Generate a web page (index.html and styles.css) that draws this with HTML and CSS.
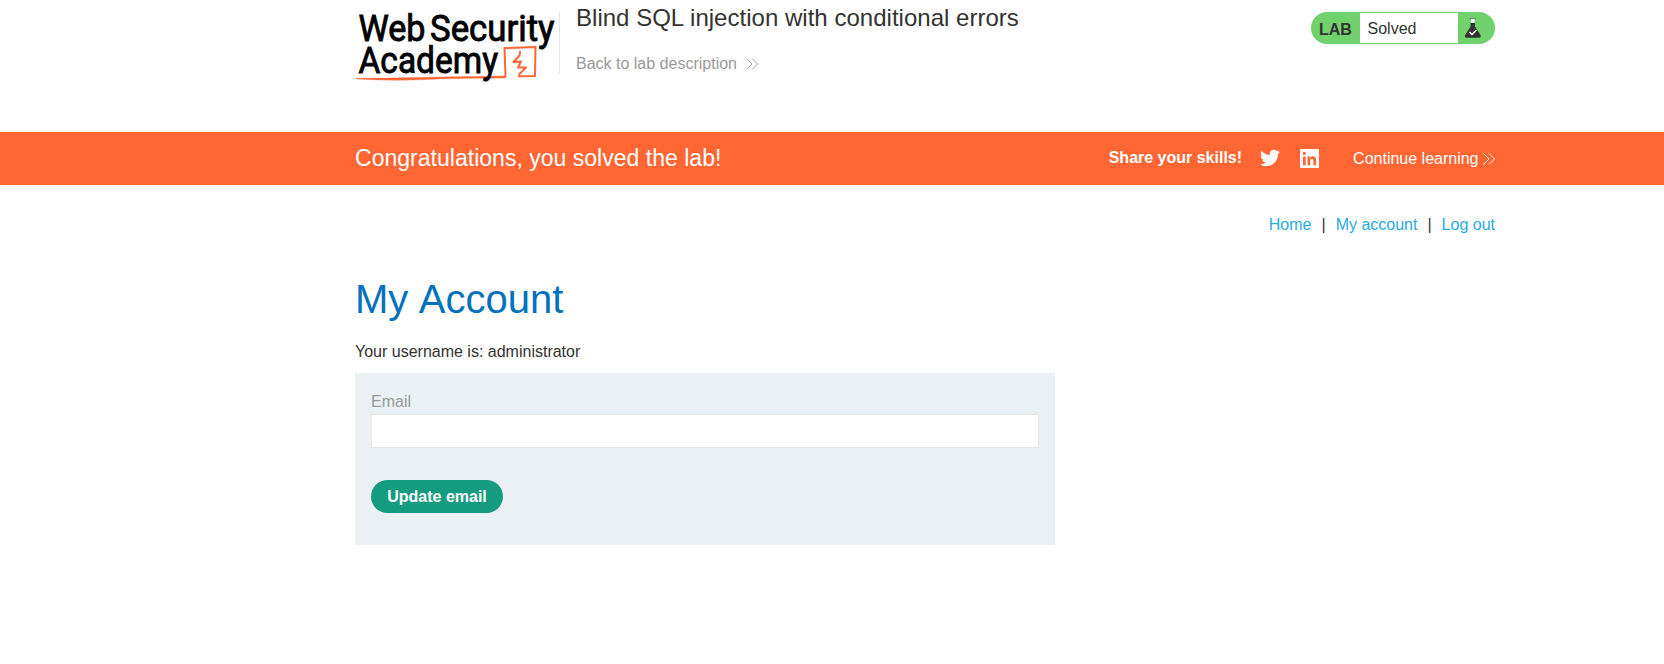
FILE: index.html
```html
<!DOCTYPE html>
<html lang="en">
<head>
<meta charset="utf-8">
<title>Blind SQL injection with conditional errors</title>
<link rel="stylesheet" href="styles.css">
</head>
<body>
<header class="lab-header container">
  <svg class="logo" viewBox="0 0 204 84" role="img" aria-label="Web Security Academy">
    <path class="logo-line" d="M150.500 77 L149.500 48 Q165 47.700 180.500 47 L180 76 L164 76.200 L164.500 74 L171 67.500 L163 67.500 L166 61.500 L158.500 62 L164 56 Q165.500 54 164.800 51"/>
    <path class="logo-swash" d="M1 78.300 Q30 78.400 60 77.600 T150.500 76 V78 Q100 78 70 79.500 T1 78.900z"/>
    <text x="3.500" y="40.500" textLength="67" lengthAdjust="spacingAndGlyphs">Web</text>
    <text x="75" y="40.500" textLength="124.500" lengthAdjust="spacingAndGlyphs">Security</text>
    <text x="3.500" y="73" textLength="139.500" lengthAdjust="spacingAndGlyphs">Academy</text>
  </svg>
  <div class="title">
    <h2>Blind SQL injection with conditional errors</h2>
    <a class="back">Back to lab description
      <svg class="chevrons" viewBox="0 0 12 12"><path d="M.5.5 6 6 .5 11.500M6 .5 11.500 6 6 11.500"/></svg>
    </a>
  </div>
  <div class="status">
    <b>LAB</b>
    <span>Solved</span>
    <svg class="flask" viewBox="0 0 18 22"><path d="M5.500 1.500h6.500" stroke="#777" stroke-width="1"/><path d="M7 2h3.600v4H7z" fill="#fff"/><path d="M6.600 6H11v3.500l5.500 8.500q.8 2.800-1.300 2.800H2.400Q.3 20.800 1.100 18l5.500-8.500z" fill="#333"/><path d="m5.500 15 2.500 2.500 4.500-4.500" fill="none" stroke="#fff" stroke-width="1.400"/></svg>
  </div>
</header>
<section class="banner">
  <div class="container banner-row">
    <h4>Congratulations, you solved the lab!</h4>
    <b class="share">Share your skills!</b>
    <svg class="twitter" viewBox="0 0 24 20"><path d="M23.950 2.570a10 10 0 0 1-2.820.770 4.960 4.960 0 0 0 2.160-2.720c-.950.550-2 .950-3.130 1.180a4.920 4.920 0 0 0-8.380 4.480C7.690 6.090 4.070 4.130 1.640 1.150a4.820 4.820 0 0 0-.670 2.480c0 1.710.870 3.210 2.190 4.100a4.900 4.900 0 0 1-2.230-.620v.060a4.920 4.920 0 0 0 3.950 4.830 5 5 0 0 1-2.210.080 4.940 4.940 0 0 0 4.600 3.420A9.870 9.870 0 0 1 0 17.540a14 14 0 0 0 7.550 2.210c9.050 0 14-7.500 14-13.980 0-.210 0-.420-.020-.630a9.940 9.940 0 0 0 2.420-2.570z"/></svg>
    <svg class="linkedin" viewBox="0 0 18 18"><path fill-rule="evenodd" d="M1 0h16q1 0 1 1v16q0 1-1 1H1q-1 0-1-1V1q0-1 1-1zM2.800 7v8.500h2.600V7zM4.100 2.700a1.500 1.500 0 1 0 0 3 1.500 1.500 0 0 0 0-3zM7.100 7v8.500h2.600v-4.200c0-2.800 3-2.700 3 0v4.200h2.600v-5c0-4.300-4.400-4.500-5.600-2.200V7z"/></svg>
    <a class="continue">Continue learning <svg class="chevrons" viewBox="0 0 12 12"><path d="M.5.5 6 6 .5 11.500M6 .5 11.500 6 6 11.500"/></svg></a>
  </div>
</section>
<main class="container">
  <nav class="nav"><a>Home</a><i>|</i><a>My account</a><i>|</i><a>Log out</a></nav>
  <h1>My Account</h1>
  <p>Your username is: administrator</p>
  <form class="login-form">
    <label for="email">Email</label>
    <input id="email" type="email">
    <button type="button">Update email</button>
  </form>
</main>
</body>
</html>
```
FILE: styles.css
```css
* { box-sizing: border-box; }
body {
  margin: 0;
  background: #fff;
  color: #333332;
  font: 16px/20px "Liberation Sans", Arial, sans-serif;
}
h1, h2, h4, p { margin: 0; font-weight: 400; }
.container { width: 1140px; margin-left: 355px; }

.lab-header { display: flex; align-items: flex-start; height: 132px; }
.logo { width: 204px; height: 84px; overflow: visible; }
.logo text { font: 400 37px Roboto, sans-serif; fill: #000; stroke: #000; stroke-width: .9; }
.logo-line { fill: none; stroke: #ff6633; stroke-width: 2; stroke-linejoin: round; }
.logo-swash { fill: #ff6633; stroke: #ff6633; stroke-width: .4; }
.title { flex: 1; height: 84px; padding-left: 17px; background: linear-gradient(#e5e5e5, #e5e5e5) 0 12px / 1px 62px no-repeat; }
.title h2 { padding-top: 4px; font-size: 24px; line-height: 28px; letter-spacing: .02px; }
.back { display: flex; align-items: center; gap: 9px; margin-top: 22px; color: #999; }
.chevrons { width: 12px; height: 12px; fill: none; stroke: currentColor; stroke-width: 1; }
.status {
  display: flex;
  width: 184px;
  height: 32px;
  margin-top: 12px;
  border-radius: 16px;
  background: #71d16d;
  overflow: hidden;
  line-height: 32px;
}
.status b { width: 49px; padding: 2px 0 0 8px; }
.status span { width: 98px; margin: 1px 0; padding-left: 7.500px; background: #fff; line-height: 32px; }
.flask { width: 18px; height: 22px; margin: 5px 0 0 6px; }

.banner { height: 53px; background: #ff6633; color: #fff; }
.banner-row { display: flex; align-items: center; height: 53px; }
.banner h4 { flex: 1; padding-bottom: 1px; font-size: 23px; letter-spacing: .02px; }
.share { margin-right: 18px; padding-bottom: 2px; }
.twitter { width: 20px; height: 18px; margin: 0 20px 1px 0; fill: #fff; }
.linkedin { width: 19px; height: 19px; margin-right: 34px; fill: #fff; }
.continue { display: flex; align-items: center; gap: 4.500px; padding-top: 1px; }

.nav { display: flex; justify-content: flex-end; padding-top: 30px; color: #29abe2; }
.nav i { margin: 0 10px; color: #333332; font-style: normal; }
h1 { margin-top: 39px; color: #0071bc; font-size: 40px; line-height: 50px; word-spacing: 1.500px; }
p { margin-top: 18px; }
.login-form { width: 700px; height: 172px; margin-top: 11px; padding: 19px 16px; background: #eaf0f3; }
.login-form label { display: block; color: #999; }
.login-form input { display: block; width: 668px; height: 34px; margin: 2px 0 32px; padding: 0 8px; border: 1px solid #e5e5e5; background: #fff; }
.login-form button { display: block; width: 132px; height: 33px; padding: 0; border: 0; border-radius: 17px; background: #159c80; color: #fff; font: 700 16px "Liberation Sans", Arial, sans-serif; }
```
